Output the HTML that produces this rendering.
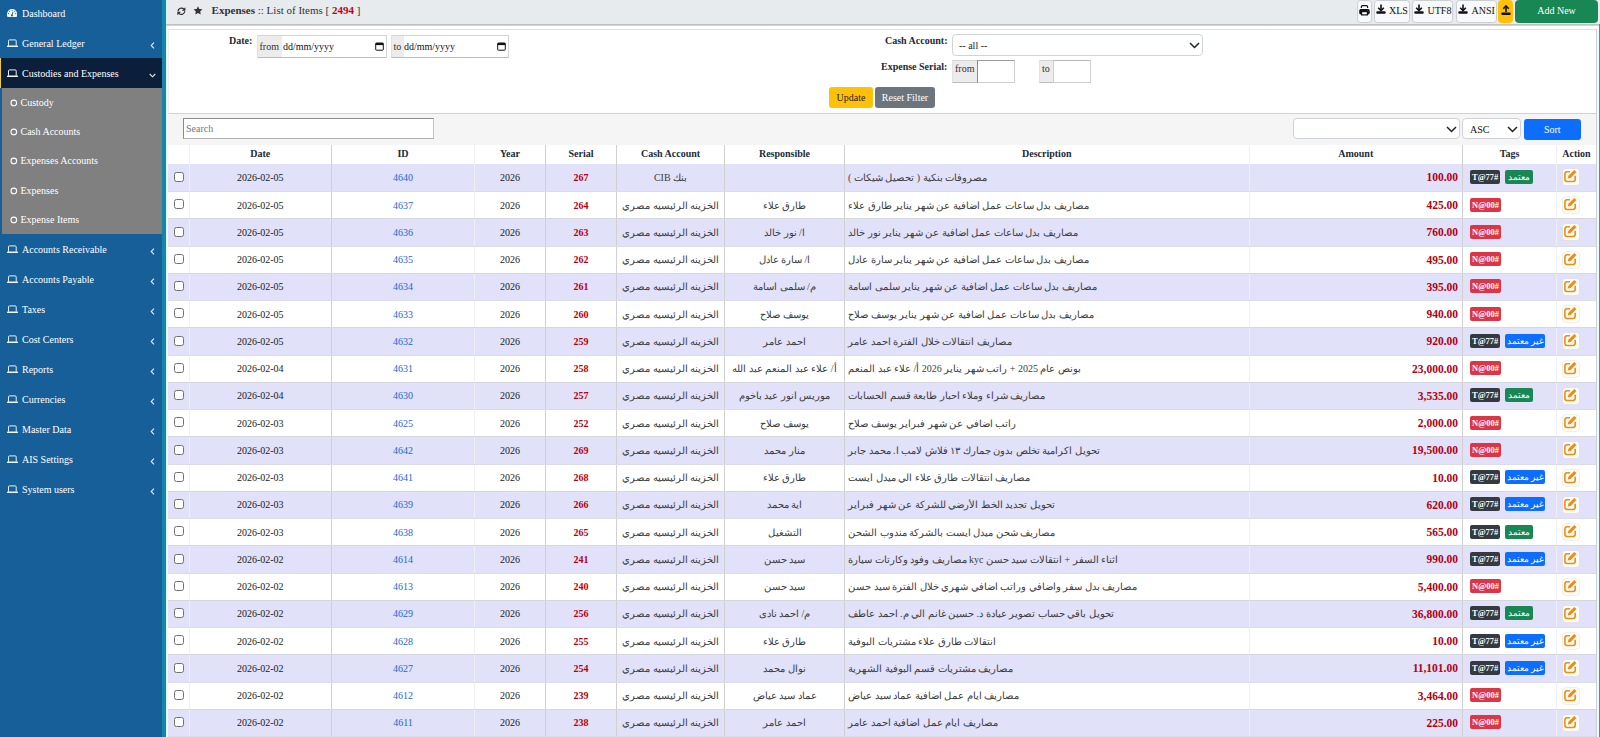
<!DOCTYPE html>
<html><head><meta charset="utf-8"><style>
*{box-sizing:border-box}
html,body{margin:0;padding:0;width:1600px;height:737px;overflow:hidden;background:#fff;font-family:"Liberation Serif",serif;font-size:10px;color:#212529}
#sb{position:absolute;left:0;top:0;width:162px;height:737px;background:#175f99;overflow:hidden}
#tl{position:absolute;left:162px;top:0;width:4px;height:737px;background:#1585aa}
#tr{position:absolute;left:1596px;top:29px;width:4px;height:708px;background:#eafcfd;border-left:1px solid #cfcfcf;border-right:1px solid #2b9cb8}
.mi{position:absolute;left:0;width:162px;color:#fff}
.mi .mic{position:absolute;left:6.9px;top:11px;line-height:0}
.mi .mt{position:absolute;left:22px;top:8.5px;line-height:13px;font-size:10px}
.mi .mch{position:absolute;left:150px;top:14.2px;line-height:0}
.mi.act{background:#0b1f3b;border-left:1px solid #f2c94c}
.mi.act .mic{left:6px} .mi.act .mt{left:21px} .mi.act .mch{left:148px;top:15px}
.sub{position:absolute;left:2px;width:160px;background:#808080}
.si{position:absolute;left:2px;width:160px;height:29.2px;color:#fff}
.si .sic{position:absolute;left:8px;top:11px;line-height:0}
.si .st{position:absolute;left:18.5px;top:8px;line-height:13px}
#hd{position:absolute;left:166px;top:0;width:1434px;height:24px;background:#e8ebee;border-left:1px solid #d4f6fb}
#tlc{position:absolute;left:166px;top:24px;width:1px;height:713px;background:#e2f9fc}
#hds{position:absolute;left:166px;top:24px;width:1434px;height:2px;background:linear-gradient(#bcbdbf,#c6c7c9 60%,#e6e6e6)}
#ttl{position:absolute;left:211.6px;top:4.3px;font-size:11px;line-height:13px;color:#333;white-space:nowrap}
#ttl b{color:#333} #ttl .n{color:#c0000e}
.hb{position:absolute;top:0.3px;height:22.3px;background:#f8f9fa;border:1px solid #cbced2;border-radius:3.5px;color:#111;font-size:10px;line-height:20.4px;white-space:nowrap}
.hb svg{position:absolute;top:3.2px}
#panel{position:absolute;left:168px;top:29px;width:1428px;height:85px;background:#fff;border-top:1px solid #e0e0e0;border-left:1px solid #efefef;border-bottom:1px solid #d2d2d2}
.lbl{position:absolute;font-weight:bold;color:#1c2a3a;font-size:10px;line-height:12px;white-space:nowrap}
.ig{position:absolute;height:23.2px;border:1px solid #d4d4d4;border-bottom-color:#bcbcbc;border-left-color:#e2e2e2;border-radius:1px;background:#fff}
.ig .inp{position:absolute;top:-1px;bottom:-1px;right:-1px;border:1px solid #cfcfcf;border-left-color:#8c8c8c;border-top-color:#9c9c9c}
.ig .ad{position:absolute;left:0;top:0;bottom:0;background:#ececec;color:#333;line-height:21px;padding-left:2px}
.ig .tx{position:absolute;top:4.7px;color:#111;line-height:13px}
.sel{position:absolute;background:#fff;border:1px solid #cfd3d7;border-radius:4px}
.btn{position:absolute;border-radius:3px;line-height:21px;text-align:center;font-size:10px}
#sband{position:absolute;left:168px;top:114px;width:1428px;height:31px;background:#f5f5f5}
#search{position:absolute;left:183px;top:118px;width:251px;height:21px;background:#fff;border:1px solid;border-color:#8a8a8a #c4c4c4 #b0b0b0 #8a8a8a;color:#777;line-height:19px;padding-left:2px}
#tbl{position:absolute;left:168px;top:144.5px;width:1428px;border-collapse:collapse;table-layout:fixed}
#tbl th{height:19px;font-weight:bold;color:#1c2a3a;font-size:10px;padding:0;border-left:1px solid #d0d0d0;background:#fff;text-align:center;line-height:12px}
#tbl th:first-child,#tbl td:first-child{border-left:none}
#tbl td{height:27.26px;padding:0;text-align:center;border-left:1px solid #d0d0d0;border-bottom:1px solid #d6d6de;color:#1a1a1a;font-size:10px;white-space:nowrap;overflow:hidden}
#tbl tr.od td{background:#e1e1fa;border-bottom-color:#dcdce6}
#tbl tr.r1 td{height:28.1px}
#tbl tr.ev td{background:#fff}
.cb{display:inline-block;width:10px;height:10px;border:1px solid #707070;border-radius:2.5px;background:#fff;vertical-align:middle;position:relative;top:-1.6px;left:0.9px}
#tbl td:nth-child(2),#tbl th:nth-child(2),#tbl td:nth-child(4),#tbl th:nth-child(4),#tbl td:nth-child(9),#tbl th:nth-child(9),#tbl td:nth-child(11),#tbl th:nth-child(11){border-left-color:#f0f0f4}
.lnk{color:#1f66d6}
#tbl td span[dir=rtl]{color:#3c3c3c}
#tbl td.ser{color:#b4000e;font-weight:bold}
#tbl td.dsc{text-align:left !important;padding-left:3px !important}
#tbl td.amt{text-align:right !important;padding-right:4px !important;color:#b4000e;font-weight:bold;font-size:11.5px !important}
#tbl td.tg{text-align:left !important;padding-left:7px !important}
.bd{display:inline-block;position:relative;top:-0.7px;height:14px;line-height:14px;border-radius:2px;color:#fff;font-size:8.5px;font-weight:bold;padding:0 2px;margin-right:5px;vertical-align:middle}
.bk{background:#343a40;width:30px;text-align:center}
.br{background:#dc3545;width:31px;text-align:center}
.bg{background:#198754;width:28px;text-align:center;font-weight:normal}
.bb{background:#0d6efd;width:40px;text-align:center;font-weight:normal}
.ed{display:inline-block;width:15.5px;height:16px;background:#fffdf6;box-shadow:0 0 0 0.6px #e6e0d8;border-radius:3px;vertical-align:middle;line-height:0}
#tbl td.ac{text-align:left;padding-left:6.3px}
</style></head><body>
<div id="sb"><div class="mi " style="top:-2px;height:30px"><span class="mic" style="top:11px;left:6.9px"><svg class="ic" width="10.2" height="8.1" viewBox="0 0 10.2 8.1"><path d="M5.1 0A5.1 5.1 0 0 0 0 5.1V6.6Q0 8.1 1.5 8.1H8.7Q10.2 8.1 10.2 6.6V5.1A5.1 5.1 0 0 0 5.1 0Z" fill="#f2f7fc"/><circle cx="1.5" cy="4.6" r="0.55" fill="#17609a"/><circle cx="2.5" cy="2.3" r="0.55" fill="#17609a"/><circle cx="5.1" cy="1.2" r="0.55" fill="#17609a"/><circle cx="7.7" cy="2.3" r="0.55" fill="#17609a"/><circle cx="8.7" cy="4.6" r="0.55" fill="#17609a"/><path d="M4.9 6.4L6 2.8" stroke="#17609a" stroke-width="0.9"/><circle cx="4.9" cy="6.5" r="1" fill="#17609a"/></svg></span><span class="mt">Dashboard</span><span class="mch"></span></div><div class="mi " style="top:28px;height:30px"><span class="mic"><svg class="ic" width="11" height="8.2" viewBox="0 0 11 8.2"><path d="M1.5 6.7V1.9Q1.5 0.9 2.5 0.9H8.2Q9.2 0.9 9.2 1.9V6.7" fill="none" stroke="#e8f1fa" stroke-width="1"/><rect x="0" y="6.6" width="11" height="1.4" rx="0.5" fill="#f2f8fd"/></svg></span><span class="mt">General Ledger</span><span class="mch"><svg class="chev" width="5" height="7" viewBox="0 0 5 7"><path d="M4 0.7L1.2 3.5L4 6.3" fill="none" stroke="#dfe9f5" stroke-width="1.1"/></svg></span></div><div class="mi act" style="top:58px;height:30px"><span class="mic"><svg class="ic" width="11" height="8.2" viewBox="0 0 11 8.2"><path d="M1.5 6.7V1.9Q1.5 0.9 2.5 0.9H8.2Q9.2 0.9 9.2 1.9V6.7" fill="none" stroke="#e8f1fa" stroke-width="1"/><rect x="0" y="6.6" width="11" height="1.4" rx="0.5" fill="#f2f8fd"/></svg></span><span class="mt">Custodies and Expenses</span><span class="mch"><svg class="chev" width="7" height="5" viewBox="0 0 7 5"><path d="M0.7 1L3.5 3.8L6.3 1" fill="none" stroke="#e6e6e6" stroke-width="1.1"/></svg></span></div><div class="sub" style="top:88px;height:146px"></div><div class="si" style="top:88.0px"><span class="sic"><svg class="ci" width="8" height="8" viewBox="0 0 8 8"><circle cx="3.8" cy="3.9" r="2.8" fill="none" stroke="#fff" stroke-width="1.1"/></svg></span><span class="st">Custody</span></div><div class="si" style="top:117.2px"><span class="sic"><svg class="ci" width="8" height="8" viewBox="0 0 8 8"><circle cx="3.8" cy="3.9" r="2.8" fill="none" stroke="#fff" stroke-width="1.1"/></svg></span><span class="st">Cash Accounts</span></div><div class="si" style="top:146.4px"><span class="sic"><svg class="ci" width="8" height="8" viewBox="0 0 8 8"><circle cx="3.8" cy="3.9" r="2.8" fill="none" stroke="#fff" stroke-width="1.1"/></svg></span><span class="st">Expenses Accounts</span></div><div class="si" style="top:175.6px"><span class="sic"><svg class="ci" width="8" height="8" viewBox="0 0 8 8"><circle cx="3.8" cy="3.9" r="2.8" fill="none" stroke="#fff" stroke-width="1.1"/></svg></span><span class="st">Expenses</span></div><div class="si" style="top:204.8px"><span class="sic"><svg class="ci" width="8" height="8" viewBox="0 0 8 8"><circle cx="3.8" cy="3.9" r="2.8" fill="none" stroke="#fff" stroke-width="1.1"/></svg></span><span class="st">Expense Items</span></div><div class="mi " style="top:234px;height:30px"><span class="mic"><svg class="ic" width="11" height="8.2" viewBox="0 0 11 8.2"><path d="M1.5 6.7V1.9Q1.5 0.9 2.5 0.9H8.2Q9.2 0.9 9.2 1.9V6.7" fill="none" stroke="#e8f1fa" stroke-width="1"/><rect x="0" y="6.6" width="11" height="1.4" rx="0.5" fill="#f2f8fd"/></svg></span><span class="mt">Accounts Receivable</span><span class="mch"><svg class="chev" width="5" height="7" viewBox="0 0 5 7"><path d="M4 0.7L1.2 3.5L4 6.3" fill="none" stroke="#dfe9f5" stroke-width="1.1"/></svg></span></div><div class="mi " style="top:264px;height:30px"><span class="mic"><svg class="ic" width="11" height="8.2" viewBox="0 0 11 8.2"><path d="M1.5 6.7V1.9Q1.5 0.9 2.5 0.9H8.2Q9.2 0.9 9.2 1.9V6.7" fill="none" stroke="#e8f1fa" stroke-width="1"/><rect x="0" y="6.6" width="11" height="1.4" rx="0.5" fill="#f2f8fd"/></svg></span><span class="mt">Accounts Payable</span><span class="mch"><svg class="chev" width="5" height="7" viewBox="0 0 5 7"><path d="M4 0.7L1.2 3.5L4 6.3" fill="none" stroke="#dfe9f5" stroke-width="1.1"/></svg></span></div><div class="mi " style="top:294px;height:30px"><span class="mic"><svg class="ic" width="11" height="8.2" viewBox="0 0 11 8.2"><path d="M1.5 6.7V1.9Q1.5 0.9 2.5 0.9H8.2Q9.2 0.9 9.2 1.9V6.7" fill="none" stroke="#e8f1fa" stroke-width="1"/><rect x="0" y="6.6" width="11" height="1.4" rx="0.5" fill="#f2f8fd"/></svg></span><span class="mt">Taxes</span><span class="mch"><svg class="chev" width="5" height="7" viewBox="0 0 5 7"><path d="M4 0.7L1.2 3.5L4 6.3" fill="none" stroke="#dfe9f5" stroke-width="1.1"/></svg></span></div><div class="mi " style="top:324px;height:30px"><span class="mic"><svg class="ic" width="11" height="8.2" viewBox="0 0 11 8.2"><path d="M1.5 6.7V1.9Q1.5 0.9 2.5 0.9H8.2Q9.2 0.9 9.2 1.9V6.7" fill="none" stroke="#e8f1fa" stroke-width="1"/><rect x="0" y="6.6" width="11" height="1.4" rx="0.5" fill="#f2f8fd"/></svg></span><span class="mt">Cost Centers</span><span class="mch"><svg class="chev" width="5" height="7" viewBox="0 0 5 7"><path d="M4 0.7L1.2 3.5L4 6.3" fill="none" stroke="#dfe9f5" stroke-width="1.1"/></svg></span></div><div class="mi " style="top:354px;height:30px"><span class="mic"><svg class="ic" width="11" height="8.2" viewBox="0 0 11 8.2"><path d="M1.5 6.7V1.9Q1.5 0.9 2.5 0.9H8.2Q9.2 0.9 9.2 1.9V6.7" fill="none" stroke="#e8f1fa" stroke-width="1"/><rect x="0" y="6.6" width="11" height="1.4" rx="0.5" fill="#f2f8fd"/></svg></span><span class="mt">Reports</span><span class="mch"><svg class="chev" width="5" height="7" viewBox="0 0 5 7"><path d="M4 0.7L1.2 3.5L4 6.3" fill="none" stroke="#dfe9f5" stroke-width="1.1"/></svg></span></div><div class="mi " style="top:384px;height:30px"><span class="mic"><svg class="ic" width="11" height="8.2" viewBox="0 0 11 8.2"><path d="M1.5 6.7V1.9Q1.5 0.9 2.5 0.9H8.2Q9.2 0.9 9.2 1.9V6.7" fill="none" stroke="#e8f1fa" stroke-width="1"/><rect x="0" y="6.6" width="11" height="1.4" rx="0.5" fill="#f2f8fd"/></svg></span><span class="mt">Currencies</span><span class="mch"><svg class="chev" width="5" height="7" viewBox="0 0 5 7"><path d="M4 0.7L1.2 3.5L4 6.3" fill="none" stroke="#dfe9f5" stroke-width="1.1"/></svg></span></div><div class="mi " style="top:414px;height:30px"><span class="mic"><svg class="ic" width="11" height="8.2" viewBox="0 0 11 8.2"><path d="M1.5 6.7V1.9Q1.5 0.9 2.5 0.9H8.2Q9.2 0.9 9.2 1.9V6.7" fill="none" stroke="#e8f1fa" stroke-width="1"/><rect x="0" y="6.6" width="11" height="1.4" rx="0.5" fill="#f2f8fd"/></svg></span><span class="mt">Master Data</span><span class="mch"><svg class="chev" width="5" height="7" viewBox="0 0 5 7"><path d="M4 0.7L1.2 3.5L4 6.3" fill="none" stroke="#dfe9f5" stroke-width="1.1"/></svg></span></div><div class="mi " style="top:444px;height:30px"><span class="mic"><svg class="ic" width="11" height="8.2" viewBox="0 0 11 8.2"><path d="M1.5 6.7V1.9Q1.5 0.9 2.5 0.9H8.2Q9.2 0.9 9.2 1.9V6.7" fill="none" stroke="#e8f1fa" stroke-width="1"/><rect x="0" y="6.6" width="11" height="1.4" rx="0.5" fill="#f2f8fd"/></svg></span><span class="mt">AIS Settings</span><span class="mch"><svg class="chev" width="5" height="7" viewBox="0 0 5 7"><path d="M4 0.7L1.2 3.5L4 6.3" fill="none" stroke="#dfe9f5" stroke-width="1.1"/></svg></span></div><div class="mi " style="top:474px;height:30px"><span class="mic"><svg class="ic" width="11" height="8.2" viewBox="0 0 11 8.2"><path d="M1.5 6.7V1.9Q1.5 0.9 2.5 0.9H8.2Q9.2 0.9 9.2 1.9V6.7" fill="none" stroke="#e8f1fa" stroke-width="1"/><rect x="0" y="6.6" width="11" height="1.4" rx="0.5" fill="#f2f8fd"/></svg></span><span class="mt">System users</span><span class="mch"><svg class="chev" width="5" height="7" viewBox="0 0 5 7"><path d="M4 0.7L1.2 3.5L4 6.3" fill="none" stroke="#dfe9f5" stroke-width="1.1"/></svg></span></div></div>
<div id="tl"></div><div id="tlc"></div>
<div id="hd"></div><div id="hds"></div>
<div style="position:absolute;left:176.6px;top:6.9px;line-height:0"><svg width="9" height="8.5" viewBox="0 0 9 8.5"><path d="M1 4.3A3.4 3.4 0 0 1 6.9 2.2" fill="none" stroke="#2b2b2b" stroke-width="1.2"/><path d="M8.4 0.2V3.7H4.9Z" fill="#2b2b2b"/><path d="M7.8 4.2A3.4 3.4 0 0 1 1.9 6.3" fill="none" stroke="#2b2b2b" stroke-width="1.2"/><path d="M0.4 8.3V4.8H3.9Z" fill="#2b2b2b"/></svg></div>
<div style="position:absolute;left:193px;top:6.3px;line-height:0"><svg width="10" height="9" viewBox="0 0 10 9.5"><path d="M5 0.2L6.4 3.1L9.7 3.5L7.3 5.7L7.9 9L5 7.4L2.1 9L2.7 5.7L0.3 3.5L3.6 3.1Z" fill="#333"/></svg></div>
<div id="ttl"><b>Expenses</b> :: List of Items [ <b class="n">2494</b> ]</div>
<div class="hb" style="left:1356.8px;width:15px"><svg style="left:1.4px;top:3.9px" width="11" height="11" viewBox="0 0 11 11"><path d="M2.4 3V1.7Q2.4 0.6 3.5 0.6H7.5Q8.6 0.6 8.6 1.7V3" fill="none" stroke="#111" stroke-width="1.2"/><rect x="0.2" y="4.1" width="10.5" height="5.3" rx="1.6" fill="#111"/><rect x="2.6" y="6.6" width="5.8" height="3.3" fill="#fff" stroke="#111" stroke-width="1.2"/><circle cx="8.9" cy="5.3" r="0.45" fill="#777"/></svg></div>
<div class="hb" style="left:1374px;width:36px"><svg style="left:1.2px" width="10" height="10" viewBox="0 0 10 10"><path d="M5 0.5V6.2" stroke="#111" stroke-width="1.6"/><path d="M2.2 3.8L5 6.6L7.8 3.8" fill="none" stroke="#111" stroke-width="1.6"/><rect x="0.3" y="7.3" width="9.4" height="2.4" rx="1" fill="#111"/></svg><span style="position:absolute;left:14px">XLS</span></div>
<div class="hb" style="left:1412px;width:41px"><svg style="left:1.2px" width="10" height="10" viewBox="0 0 10 10"><path d="M5 0.5V6.2" stroke="#111" stroke-width="1.6"/><path d="M2.2 3.8L5 6.6L7.8 3.8" fill="none" stroke="#111" stroke-width="1.6"/><rect x="0.3" y="7.3" width="9.4" height="2.4" rx="1" fill="#111"/></svg><span style="position:absolute;left:14.5px">UTF8</span></div>
<div class="hb" style="left:1456px;width:41px"><svg style="left:1.2px" width="10" height="10" viewBox="0 0 10 10"><path d="M5 0.5V6.2" stroke="#111" stroke-width="1.6"/><path d="M2.2 3.8L5 6.6L7.8 3.8" fill="none" stroke="#111" stroke-width="1.6"/><rect x="0.3" y="7.3" width="9.4" height="2.4" rx="1" fill="#111"/></svg><span style="position:absolute;left:14.5px">ANSI</span></div>
<div class="hb" style="left:1498px;width:15px;background:#ffc107;border-color:#ffc107"><svg style="left:1.5px;top:3.5px" width="10" height="11" viewBox="0 0 10 11"><path d="M5 7V1.2" stroke="#111" stroke-width="1.6"/><path d="M2.2 3.8L5 1L7.8 3.8" fill="none" stroke="#111" stroke-width="1.6"/><rect x="0.3" y="7.6" width="9.4" height="2.4" rx="1" fill="#111"/></svg></div>
<div class="hb" style="left:1515px;width:83px;background:#198754;border-color:#198754;color:#fff;text-align:center;font-size:10px">Add New</div>
<div id="tr"></div><div style="position:absolute;left:1599px;top:24px;width:1px;height:6px;background:#2b9cb8"></div>
<div id="panel"></div>
<div class="lbl" style="left:229px;top:35px">Date:</div>
<div class="ig" style="left:256.5px;top:34.5px;width:130.5px"><span class="ad" style="width:24.5px">from</span><span class="tx" style="left:25.5px">dd/mm/yyyy</span><span style="position:absolute;left:117.5px;top:6.5px;line-height:0"><svg width="9" height="9" viewBox="0 0 9 9"><rect x="0.7" y="1" width="7.6" height="7.2" rx="0.8" fill="none" stroke="#111" stroke-width="1"/><rect x="0.7" y="1" width="7.6" height="2.1" fill="#111"/></svg></span></div>
<div class="ig" style="left:390.5px;top:34.5px;width:118.5px"><span class="ad" style="width:12px">to</span><span class="tx" style="left:12.5px">dd/mm/yyyy</span><span style="position:absolute;left:105.5px;top:6.5px;line-height:0"><svg width="9" height="9" viewBox="0 0 9 9"><rect x="0.7" y="1" width="7.6" height="7.2" rx="0.8" fill="none" stroke="#111" stroke-width="1"/><rect x="0.7" y="1" width="7.6" height="2.1" fill="#111"/></svg></span></div>
<div class="lbl" style="left:885px;top:35px">Cash Account:</div>
<div class="sel" style="left:952px;top:34px;width:251px;height:22px"><span style="position:absolute;left:6px;top:4px;line-height:13px;color:#222">-- all --</span><span style="position:absolute;left:236px;top:7px;line-height:0"><svg width="11" height="7" viewBox="0 0 11 7"><path d="M1 1L5.5 5.5L10 1" fill="none" stroke="#222" stroke-width="1.5"/></svg></span></div>
<div class="lbl" style="left:881px;top:61px">Expense Serial:</div>
<div class="ig" style="left:952px;top:60px;width:63px;height:22.6px"><span class="ad" style="width:25px;line-height:16.5px">from</span><span class="inp" style="left:24px"></span></div>
<div class="ig" style="left:1039px;top:60px;width:52px;height:22.6px"><span class="ad" style="width:14px;line-height:16.5px">to</span><span class="inp" style="left:13px;border-left-color:#cfcfcf;border-top-color:#b8b8b8"></span></div>
<div class="btn" style="left:829px;top:86.5px;width:44px;height:21.5px;background:#ffc107;color:#222">Update</div>
<div class="btn" style="left:875px;top:86.5px;width:60px;height:21.5px;background:#6c757d;color:#fff">Reset Filter</div>
<div id="sband"></div>
<div id="search">Search</div>
<div class="sel" style="left:1293px;top:118px;width:167px;height:21px"><span style="position:absolute;left:152px;top:7px;line-height:0"><svg width="11" height="7" viewBox="0 0 11 7"><path d="M1 1L5.5 5.5L10 1" fill="none" stroke="#222" stroke-width="1.5"/></svg></span></div>
<div class="sel" style="left:1462px;top:118px;width:59px;height:21px"><span style="position:absolute;left:7px;top:3.5px;line-height:13px;color:#111">ASC</span><span style="position:absolute;left:44px;top:7px;line-height:0"><svg width="11" height="7" viewBox="0 0 11 7"><path d="M1 1L5.5 5.5L10 1" fill="none" stroke="#222" stroke-width="1.5"/></svg></span></div>
<div class="btn" style="left:1523.5px;top:119px;width:57.5px;height:21px;background:#0d6efd;color:#fff">Sort</div>
<table id="tbl">
<colgroup><col style="width:21px"><col style="width:142.5px"><col style="width:143px"><col style="width:71px"><col style="width:71px"><col style="width:108px"><col style="width:120px"><col style="width:404.5px"><col style="width:213.5px"><col style="width:94px"><col style="width:39.5px"></colgroup>
<tr><th></th><th>Date</th><th>ID</th><th>Year</th><th>Serial</th><th>Cash Account</th><th>Responsible</th><th>Description</th><th>Amount</th><th>Tags</th><th>Action</th></tr>
<tr class="od r1"><td class="c0"><span class="cb"></span></td><td>2026-02-05</td><td><span class="lnk">4640</span></td><td>2026</td><td class="ser">267</td><td><span dir="rtl">بنك CIB</span></td><td><span dir="rtl"></span></td><td class="dsc"><span dir="rtl">مصروفات بنكية ( تحصيل شيكات )</span></td><td class="amt">100.00</td><td class="tg"><span class="bd bk">T@77#</span><span class="bd bg">معتمد</span></td><td class="ac"><span class="ed"><svg width="15.5" height="16" viewBox="0 0 15.5 16"><path d="M7 2.7H4A2.2 2.2 0 0 0 1.9 4.9V10.3A2.2 2.2 0 0 0 4 12.5H10A2.2 2.2 0 0 0 12.2 10.3V6.8" stroke="#f08c14" stroke-width="1.6" fill="none"/><path d="M4.8 9.4L5.4 6.8L11.3 0.9L13.5 3.1L7.6 9Z" fill="#f08c14"/></svg></span></td></tr><tr class="ev"><td class="c0"><span class="cb"></span></td><td>2026-02-05</td><td><span class="lnk">4637</span></td><td>2026</td><td class="ser">264</td><td><span dir="rtl">الخزينه الرئيسيه مصري</span></td><td><span dir="rtl">طارق علاء</span></td><td class="dsc"><span dir="rtl">مصاريف بدل ساعات عمل اضافية عن شهر يناير طارق علاء</span></td><td class="amt">425.00</td><td class="tg"><span class="bd br">N@00#</span></td><td class="ac"><span class="ed"><svg width="15.5" height="16" viewBox="0 0 15.5 16"><path d="M7 2.7H4A2.2 2.2 0 0 0 1.9 4.9V10.3A2.2 2.2 0 0 0 4 12.5H10A2.2 2.2 0 0 0 12.2 10.3V6.8" stroke="#f08c14" stroke-width="1.6" fill="none"/><path d="M4.8 9.4L5.4 6.8L11.3 0.9L13.5 3.1L7.6 9Z" fill="#f08c14"/></svg></span></td></tr><tr class="od"><td class="c0"><span class="cb"></span></td><td>2026-02-05</td><td><span class="lnk">4636</span></td><td>2026</td><td class="ser">263</td><td><span dir="rtl">الخزينه الرئيسيه مصري</span></td><td><span dir="rtl">ا/ نور خالد</span></td><td class="dsc"><span dir="rtl">مصاريف بدل ساعات عمل اضافية عن شهر يناير نور خالد</span></td><td class="amt">760.00</td><td class="tg"><span class="bd br">N@00#</span></td><td class="ac"><span class="ed"><svg width="15.5" height="16" viewBox="0 0 15.5 16"><path d="M7 2.7H4A2.2 2.2 0 0 0 1.9 4.9V10.3A2.2 2.2 0 0 0 4 12.5H10A2.2 2.2 0 0 0 12.2 10.3V6.8" stroke="#f08c14" stroke-width="1.6" fill="none"/><path d="M4.8 9.4L5.4 6.8L11.3 0.9L13.5 3.1L7.6 9Z" fill="#f08c14"/></svg></span></td></tr><tr class="ev"><td class="c0"><span class="cb"></span></td><td>2026-02-05</td><td><span class="lnk">4635</span></td><td>2026</td><td class="ser">262</td><td><span dir="rtl">الخزينه الرئيسيه مصري</span></td><td><span dir="rtl">ا/ سارة عادل</span></td><td class="dsc"><span dir="rtl">مصاريف بدل ساعات عمل اضافية عن شهر يناير سارة عادل</span></td><td class="amt">495.00</td><td class="tg"><span class="bd br">N@00#</span></td><td class="ac"><span class="ed"><svg width="15.5" height="16" viewBox="0 0 15.5 16"><path d="M7 2.7H4A2.2 2.2 0 0 0 1.9 4.9V10.3A2.2 2.2 0 0 0 4 12.5H10A2.2 2.2 0 0 0 12.2 10.3V6.8" stroke="#f08c14" stroke-width="1.6" fill="none"/><path d="M4.8 9.4L5.4 6.8L11.3 0.9L13.5 3.1L7.6 9Z" fill="#f08c14"/></svg></span></td></tr><tr class="od"><td class="c0"><span class="cb"></span></td><td>2026-02-05</td><td><span class="lnk">4634</span></td><td>2026</td><td class="ser">261</td><td><span dir="rtl">الخزينه الرئيسيه مصري</span></td><td><span dir="rtl">م/ سلمى اسامة</span></td><td class="dsc"><span dir="rtl">مصاريف بدل ساعات عمل اضافية عن شهر يناير سلمى اسامة</span></td><td class="amt">395.00</td><td class="tg"><span class="bd br">N@00#</span></td><td class="ac"><span class="ed"><svg width="15.5" height="16" viewBox="0 0 15.5 16"><path d="M7 2.7H4A2.2 2.2 0 0 0 1.9 4.9V10.3A2.2 2.2 0 0 0 4 12.5H10A2.2 2.2 0 0 0 12.2 10.3V6.8" stroke="#f08c14" stroke-width="1.6" fill="none"/><path d="M4.8 9.4L5.4 6.8L11.3 0.9L13.5 3.1L7.6 9Z" fill="#f08c14"/></svg></span></td></tr><tr class="ev"><td class="c0"><span class="cb"></span></td><td>2026-02-05</td><td><span class="lnk">4633</span></td><td>2026</td><td class="ser">260</td><td><span dir="rtl">الخزينه الرئيسيه مصري</span></td><td><span dir="rtl">يوسف صلاح</span></td><td class="dsc"><span dir="rtl">مصاريف بدل ساعات عمل اضافية عن شهر يناير يوسف صلاح</span></td><td class="amt">940.00</td><td class="tg"><span class="bd br">N@00#</span></td><td class="ac"><span class="ed"><svg width="15.5" height="16" viewBox="0 0 15.5 16"><path d="M7 2.7H4A2.2 2.2 0 0 0 1.9 4.9V10.3A2.2 2.2 0 0 0 4 12.5H10A2.2 2.2 0 0 0 12.2 10.3V6.8" stroke="#f08c14" stroke-width="1.6" fill="none"/><path d="M4.8 9.4L5.4 6.8L11.3 0.9L13.5 3.1L7.6 9Z" fill="#f08c14"/></svg></span></td></tr><tr class="od"><td class="c0"><span class="cb"></span></td><td>2026-02-05</td><td><span class="lnk">4632</span></td><td>2026</td><td class="ser">259</td><td><span dir="rtl">الخزينه الرئيسيه مصري</span></td><td><span dir="rtl">احمد عامر</span></td><td class="dsc"><span dir="rtl">مصاريف انتقالات خلال الفترة احمد عامر</span></td><td class="amt">920.00</td><td class="tg"><span class="bd bk">T@77#</span><span class="bd bb">غير معتمد</span></td><td class="ac"><span class="ed"><svg width="15.5" height="16" viewBox="0 0 15.5 16"><path d="M7 2.7H4A2.2 2.2 0 0 0 1.9 4.9V10.3A2.2 2.2 0 0 0 4 12.5H10A2.2 2.2 0 0 0 12.2 10.3V6.8" stroke="#f08c14" stroke-width="1.6" fill="none"/><path d="M4.8 9.4L5.4 6.8L11.3 0.9L13.5 3.1L7.6 9Z" fill="#f08c14"/></svg></span></td></tr><tr class="ev"><td class="c0"><span class="cb"></span></td><td>2026-02-04</td><td><span class="lnk">4631</span></td><td>2026</td><td class="ser">258</td><td><span dir="rtl">الخزينه الرئيسيه مصري</span></td><td><span dir="rtl">أ/ علاء عبد المنعم عبد الله</span></td><td class="dsc"><span dir="rtl">بونص عام 2025 + راتب شهر يناير 2026 أ/ علاء عبد المنعم</span></td><td class="amt">23,000.00</td><td class="tg"><span class="bd br">N@00#</span></td><td class="ac"><span class="ed"><svg width="15.5" height="16" viewBox="0 0 15.5 16"><path d="M7 2.7H4A2.2 2.2 0 0 0 1.9 4.9V10.3A2.2 2.2 0 0 0 4 12.5H10A2.2 2.2 0 0 0 12.2 10.3V6.8" stroke="#f08c14" stroke-width="1.6" fill="none"/><path d="M4.8 9.4L5.4 6.8L11.3 0.9L13.5 3.1L7.6 9Z" fill="#f08c14"/></svg></span></td></tr><tr class="od"><td class="c0"><span class="cb"></span></td><td>2026-02-04</td><td><span class="lnk">4630</span></td><td>2026</td><td class="ser">257</td><td><span dir="rtl">الخزينه الرئيسيه مصري</span></td><td><span dir="rtl">موريس انور عيد باخوم</span></td><td class="dsc"><span dir="rtl">مصاريف شراء وملاء احبار طابعة قسم الحسابات</span></td><td class="amt">3,535.00</td><td class="tg"><span class="bd bk">T@77#</span><span class="bd bg">معتمد</span></td><td class="ac"><span class="ed"><svg width="15.5" height="16" viewBox="0 0 15.5 16"><path d="M7 2.7H4A2.2 2.2 0 0 0 1.9 4.9V10.3A2.2 2.2 0 0 0 4 12.5H10A2.2 2.2 0 0 0 12.2 10.3V6.8" stroke="#f08c14" stroke-width="1.6" fill="none"/><path d="M4.8 9.4L5.4 6.8L11.3 0.9L13.5 3.1L7.6 9Z" fill="#f08c14"/></svg></span></td></tr><tr class="ev"><td class="c0"><span class="cb"></span></td><td>2026-02-03</td><td><span class="lnk">4625</span></td><td>2026</td><td class="ser">252</td><td><span dir="rtl">الخزينه الرئيسيه مصري</span></td><td><span dir="rtl">يوسف صلاح</span></td><td class="dsc"><span dir="rtl">راتب اضافي عن شهر فبراير يوسف صلاح</span></td><td class="amt">2,000.00</td><td class="tg"><span class="bd br">N@00#</span></td><td class="ac"><span class="ed"><svg width="15.5" height="16" viewBox="0 0 15.5 16"><path d="M7 2.7H4A2.2 2.2 0 0 0 1.9 4.9V10.3A2.2 2.2 0 0 0 4 12.5H10A2.2 2.2 0 0 0 12.2 10.3V6.8" stroke="#f08c14" stroke-width="1.6" fill="none"/><path d="M4.8 9.4L5.4 6.8L11.3 0.9L13.5 3.1L7.6 9Z" fill="#f08c14"/></svg></span></td></tr><tr class="od"><td class="c0"><span class="cb"></span></td><td>2026-02-03</td><td><span class="lnk">4642</span></td><td>2026</td><td class="ser">269</td><td><span dir="rtl">الخزينه الرئيسيه مصري</span></td><td><span dir="rtl">منار محمد</span></td><td class="dsc"><span dir="rtl">تحويل اكرامية تخلص بدون جمارك ١٣ فلاش لامب ا. محمد جابر</span></td><td class="amt">19,500.00</td><td class="tg"><span class="bd br">N@00#</span></td><td class="ac"><span class="ed"><svg width="15.5" height="16" viewBox="0 0 15.5 16"><path d="M7 2.7H4A2.2 2.2 0 0 0 1.9 4.9V10.3A2.2 2.2 0 0 0 4 12.5H10A2.2 2.2 0 0 0 12.2 10.3V6.8" stroke="#f08c14" stroke-width="1.6" fill="none"/><path d="M4.8 9.4L5.4 6.8L11.3 0.9L13.5 3.1L7.6 9Z" fill="#f08c14"/></svg></span></td></tr><tr class="ev"><td class="c0"><span class="cb"></span></td><td>2026-02-03</td><td><span class="lnk">4641</span></td><td>2026</td><td class="ser">268</td><td><span dir="rtl">الخزينه الرئيسيه مصري</span></td><td><span dir="rtl">طارق علاء</span></td><td class="dsc"><span dir="rtl">مصاريف انتقالات طارق علاء الي ميدل ايست</span></td><td class="amt">10.00</td><td class="tg"><span class="bd bk">T@77#</span><span class="bd bb">غير معتمد</span></td><td class="ac"><span class="ed"><svg width="15.5" height="16" viewBox="0 0 15.5 16"><path d="M7 2.7H4A2.2 2.2 0 0 0 1.9 4.9V10.3A2.2 2.2 0 0 0 4 12.5H10A2.2 2.2 0 0 0 12.2 10.3V6.8" stroke="#f08c14" stroke-width="1.6" fill="none"/><path d="M4.8 9.4L5.4 6.8L11.3 0.9L13.5 3.1L7.6 9Z" fill="#f08c14"/></svg></span></td></tr><tr class="od"><td class="c0"><span class="cb"></span></td><td>2026-02-03</td><td><span class="lnk">4639</span></td><td>2026</td><td class="ser">266</td><td><span dir="rtl">الخزينه الرئيسيه مصري</span></td><td><span dir="rtl">اية محمد</span></td><td class="dsc"><span dir="rtl">تحويل تجديد الخط الأرضي للشركة عن شهر فبراير</span></td><td class="amt">620.00</td><td class="tg"><span class="bd bk">T@77#</span><span class="bd bb">غير معتمد</span></td><td class="ac"><span class="ed"><svg width="15.5" height="16" viewBox="0 0 15.5 16"><path d="M7 2.7H4A2.2 2.2 0 0 0 1.9 4.9V10.3A2.2 2.2 0 0 0 4 12.5H10A2.2 2.2 0 0 0 12.2 10.3V6.8" stroke="#f08c14" stroke-width="1.6" fill="none"/><path d="M4.8 9.4L5.4 6.8L11.3 0.9L13.5 3.1L7.6 9Z" fill="#f08c14"/></svg></span></td></tr><tr class="ev"><td class="c0"><span class="cb"></span></td><td>2026-02-03</td><td><span class="lnk">4638</span></td><td>2026</td><td class="ser">265</td><td><span dir="rtl">الخزينه الرئيسيه مصري</span></td><td><span dir="rtl">التشغيل</span></td><td class="dsc"><span dir="rtl">مصاريف شحن ميدل ايست بالشركة مندوب الشحن</span></td><td class="amt">565.00</td><td class="tg"><span class="bd bk">T@77#</span><span class="bd bg">معتمد</span></td><td class="ac"><span class="ed"><svg width="15.5" height="16" viewBox="0 0 15.5 16"><path d="M7 2.7H4A2.2 2.2 0 0 0 1.9 4.9V10.3A2.2 2.2 0 0 0 4 12.5H10A2.2 2.2 0 0 0 12.2 10.3V6.8" stroke="#f08c14" stroke-width="1.6" fill="none"/><path d="M4.8 9.4L5.4 6.8L11.3 0.9L13.5 3.1L7.6 9Z" fill="#f08c14"/></svg></span></td></tr><tr class="od"><td class="c0"><span class="cb"></span></td><td>2026-02-02</td><td><span class="lnk">4614</span></td><td>2026</td><td class="ser">241</td><td><span dir="rtl">الخزينه الرئيسيه مصري</span></td><td><span dir="rtl">سيد حسن</span></td><td class="dsc"><span dir="rtl">اثناء السفر + انتقالات سيد حسن kyc مصاريف وفود وكارتات سيارة</span></td><td class="amt">990.00</td><td class="tg"><span class="bd bk">T@77#</span><span class="bd bb">غير معتمد</span></td><td class="ac"><span class="ed"><svg width="15.5" height="16" viewBox="0 0 15.5 16"><path d="M7 2.7H4A2.2 2.2 0 0 0 1.9 4.9V10.3A2.2 2.2 0 0 0 4 12.5H10A2.2 2.2 0 0 0 12.2 10.3V6.8" stroke="#f08c14" stroke-width="1.6" fill="none"/><path d="M4.8 9.4L5.4 6.8L11.3 0.9L13.5 3.1L7.6 9Z" fill="#f08c14"/></svg></span></td></tr><tr class="ev"><td class="c0"><span class="cb"></span></td><td>2026-02-02</td><td><span class="lnk">4613</span></td><td>2026</td><td class="ser">240</td><td><span dir="rtl">الخزينه الرئيسيه مصري</span></td><td><span dir="rtl">سيد حسن</span></td><td class="dsc"><span dir="rtl">مصاريف بدل سفر واضافي وراتب اضافي شهري خلال الفترة سيد حسن</span></td><td class="amt">5,400.00</td><td class="tg"><span class="bd br">N@00#</span></td><td class="ac"><span class="ed"><svg width="15.5" height="16" viewBox="0 0 15.5 16"><path d="M7 2.7H4A2.2 2.2 0 0 0 1.9 4.9V10.3A2.2 2.2 0 0 0 4 12.5H10A2.2 2.2 0 0 0 12.2 10.3V6.8" stroke="#f08c14" stroke-width="1.6" fill="none"/><path d="M4.8 9.4L5.4 6.8L11.3 0.9L13.5 3.1L7.6 9Z" fill="#f08c14"/></svg></span></td></tr><tr class="od"><td class="c0"><span class="cb"></span></td><td>2026-02-02</td><td><span class="lnk">4629</span></td><td>2026</td><td class="ser">256</td><td><span dir="rtl">الخزينه الرئيسيه مصري</span></td><td><span dir="rtl">م/ احمد نادى</span></td><td class="dsc"><span dir="rtl">تحويل باقي حساب تصوير عيادة د. حسين غانم الي م. احمد عاطف</span></td><td class="amt">36,800.00</td><td class="tg"><span class="bd bk">T@77#</span><span class="bd bg">معتمد</span></td><td class="ac"><span class="ed"><svg width="15.5" height="16" viewBox="0 0 15.5 16"><path d="M7 2.7H4A2.2 2.2 0 0 0 1.9 4.9V10.3A2.2 2.2 0 0 0 4 12.5H10A2.2 2.2 0 0 0 12.2 10.3V6.8" stroke="#f08c14" stroke-width="1.6" fill="none"/><path d="M4.8 9.4L5.4 6.8L11.3 0.9L13.5 3.1L7.6 9Z" fill="#f08c14"/></svg></span></td></tr><tr class="ev"><td class="c0"><span class="cb"></span></td><td>2026-02-02</td><td><span class="lnk">4628</span></td><td>2026</td><td class="ser">255</td><td><span dir="rtl">الخزينه الرئيسيه مصري</span></td><td><span dir="rtl">طارق علاء</span></td><td class="dsc"><span dir="rtl">انتقالات طارق علاء مشتريات البوفية</span></td><td class="amt">10.00</td><td class="tg"><span class="bd bk">T@77#</span><span class="bd bb">غير معتمد</span></td><td class="ac"><span class="ed"><svg width="15.5" height="16" viewBox="0 0 15.5 16"><path d="M7 2.7H4A2.2 2.2 0 0 0 1.9 4.9V10.3A2.2 2.2 0 0 0 4 12.5H10A2.2 2.2 0 0 0 12.2 10.3V6.8" stroke="#f08c14" stroke-width="1.6" fill="none"/><path d="M4.8 9.4L5.4 6.8L11.3 0.9L13.5 3.1L7.6 9Z" fill="#f08c14"/></svg></span></td></tr><tr class="od"><td class="c0"><span class="cb"></span></td><td>2026-02-02</td><td><span class="lnk">4627</span></td><td>2026</td><td class="ser">254</td><td><span dir="rtl">الخزينه الرئيسيه مصري</span></td><td><span dir="rtl">نوال محمد</span></td><td class="dsc"><span dir="rtl">مصاريف مشتريات قسم البوفية الشهرية</span></td><td class="amt">11,101.00</td><td class="tg"><span class="bd bk">T@77#</span><span class="bd bb">غير معتمد</span></td><td class="ac"><span class="ed"><svg width="15.5" height="16" viewBox="0 0 15.5 16"><path d="M7 2.7H4A2.2 2.2 0 0 0 1.9 4.9V10.3A2.2 2.2 0 0 0 4 12.5H10A2.2 2.2 0 0 0 12.2 10.3V6.8" stroke="#f08c14" stroke-width="1.6" fill="none"/><path d="M4.8 9.4L5.4 6.8L11.3 0.9L13.5 3.1L7.6 9Z" fill="#f08c14"/></svg></span></td></tr><tr class="ev"><td class="c0"><span class="cb"></span></td><td>2026-02-02</td><td><span class="lnk">4612</span></td><td>2026</td><td class="ser">239</td><td><span dir="rtl">الخزينه الرئيسيه مصري</span></td><td><span dir="rtl">عماد سيد عياض</span></td><td class="dsc"><span dir="rtl">مصاريف ايام عمل اضافية عماد سيد عياض</span></td><td class="amt">3,464.00</td><td class="tg"><span class="bd br">N@00#</span></td><td class="ac"><span class="ed"><svg width="15.5" height="16" viewBox="0 0 15.5 16"><path d="M7 2.7H4A2.2 2.2 0 0 0 1.9 4.9V10.3A2.2 2.2 0 0 0 4 12.5H10A2.2 2.2 0 0 0 12.2 10.3V6.8" stroke="#f08c14" stroke-width="1.6" fill="none"/><path d="M4.8 9.4L5.4 6.8L11.3 0.9L13.5 3.1L7.6 9Z" fill="#f08c14"/></svg></span></td></tr><tr class="od"><td class="c0"><span class="cb"></span></td><td>2026-02-02</td><td><span class="lnk">4611</span></td><td>2026</td><td class="ser">238</td><td><span dir="rtl">الخزينه الرئيسيه مصري</span></td><td><span dir="rtl">احمد عامر</span></td><td class="dsc"><span dir="rtl">مصاريف ايام عمل اضافية احمد عامر</span></td><td class="amt">225.00</td><td class="tg"><span class="bd br">N@00#</span></td><td class="ac"><span class="ed"><svg width="15.5" height="16" viewBox="0 0 15.5 16"><path d="M7 2.7H4A2.2 2.2 0 0 0 1.9 4.9V10.3A2.2 2.2 0 0 0 4 12.5H10A2.2 2.2 0 0 0 12.2 10.3V6.8" stroke="#f08c14" stroke-width="1.6" fill="none"/><path d="M4.8 9.4L5.4 6.8L11.3 0.9L13.5 3.1L7.6 9Z" fill="#f08c14"/></svg></span></td></tr>
</table>
</body></html>
